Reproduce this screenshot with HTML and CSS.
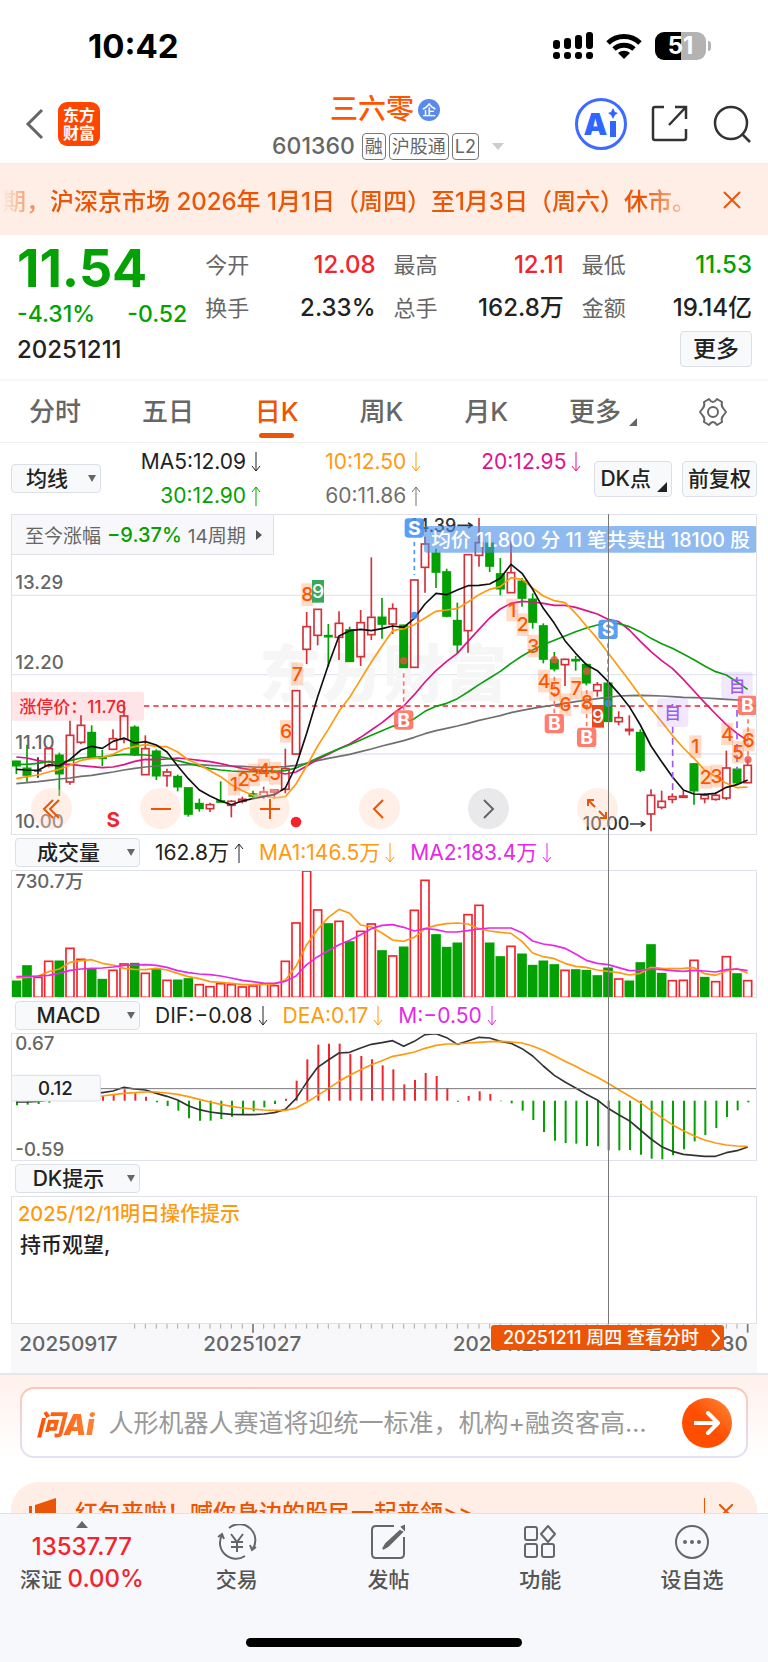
FILE: index.html
```
<!DOCTYPE html>
<html lang="zh-CN">
<head>
<meta charset="utf-8">
<meta name="viewport" content="width=device-width, initial-scale=1.0">
<title>三六零 601360</title>
<link rel="stylesheet" href="styles.css">
</head>
<body>

<svg class="defs" aria-hidden="true">
    <symbol id="down" viewBox="0 0 10 20"><path d="M5 0v19M1 14l4 5 4-5"/></symbol>
    <symbol id="up" viewBox="0 0 10 20"><path d="M5 20V1M1 6l4-5 4 5"/></symbol>
</svg>

<div class="status-bar">
    <span class="time">10:42</span>
    <div class="status-icons">
        <svg width="40" height="28" viewBox="0 0 40 28">
            <rect x="0" y="8" width="7" height="9" rx="3"/>
            <rect x="11" y="6" width="7" height="11" rx="3"/>
            <rect x="22" y="3" width="7" height="14" rx="3"/>
            <rect x="33" y="0" width="7" height="17" rx="3"/>
            <rect x="0" y="20" width="7" height="7" rx="3"/>
            <rect x="11" y="20" width="7" height="7" rx="3"/>
            <rect x="22" y="20" width="7" height="7" rx="3"/>
            <rect x="33" y="20" width="7" height="7" rx="3"/>
        </svg>
        <svg width="36" height="26" viewBox="0 0 36 26">
            <path d="M2 10a23 23 0 0 1 32 0" fill="none" stroke="#000" stroke-width="5"/>
            <path d="M8 16a15 15 0 0 1 20 0" fill="none" stroke="#000" stroke-width="5"/>
            <path d="M12 20a9 9 0 0 1 12 0l-6 6z"/>
        </svg>
        <div class="battery"><span>51</span></div>
    </div>
</div>

<header class="header">
    <div class="header-left">
        <button class="icon-btn" aria-label="返回">
            <svg width="20" height="32" viewBox="0 0 20 32"><path d="M17 2L3 16l14 14" fill="none" stroke="#666" stroke-width="3"/></svg>
        </button>
        <a class="logo" href="#">东方<br>财富</a>
    </div>
    <div class="header-title">
        <h1>三六零<span class="corp">企</span></h1>
        <div class="code">
            <span>601360</span>
            <span class="tag">融</span><span class="tag">沪股通</span><span class="tag">L2</span>
            <i class="caret"></i>
        </div>
    </div>
    <div class="header-right">
        <button class="ai-btn" aria-label="Ai">A<svg width="11" height="32" viewBox="0 0 11 32"><path d="M6 0l2 4 3 1-3 2-2 4-2-4-3-2 3-1zM3 13h6v16H3z" fill="#2f66ff"/></svg></button>
        <button class="icon-btn" aria-label="分享">
            <svg width="38" height="38" viewBox="0 0 38 38" fill="none" stroke="#333" stroke-width="2.5"><path d="M13 2H4q-2 0-2 2v29q0 2 2 2h29q2 0 2-2v-9M35 14V2H24M35 2L18 20"/></svg>
        </button>
        <button class="icon-btn" aria-label="搜索">
            <svg width="38" height="38" viewBox="0 0 38 38" fill="none" stroke="#333" stroke-width="2.5"><circle cx="18" cy="18" r="16"/><path d="M29 29l8 8"/></svg>
        </button>
    </div>
</header>

<div class="notice">
    <p>期，沪深京市场 2026年 1月1日（周四）至1月3日（周六）休市。</p>
    <button class="icon-btn" aria-label="关闭">
        <svg width="18" height="18" viewBox="0 0 18 18"><path d="M1 1l16 16M17 1L1 17" stroke="#ec5505" stroke-width="2"/></svg>
    </button>
</div>

<section class="quote">
    <div class="price">
        <strong class="green">11.54</strong>
        <p class="green"><span>-4.31%</span><span>-0.52</span></p>
    </div>
    <dl>
        <div><dt>今开</dt><dd class="red">12.08</dd></div>
        <div><dt>换手</dt><dd>2.33%</dd></div>
    </dl>
    <dl>
        <div><dt>最高</dt><dd class="red">12.11</dd></div>
        <div><dt>总手</dt><dd>162.8万</dd></div>
    </dl>
    <dl>
        <div><dt>最低</dt><dd class="green">11.53</dd></div>
        <div><dt>金额</dt><dd>19.14亿</dd></div>
    </dl>
    <div class="quote-date">
        <span>20251211</span>
        <button class="btn">更多</button>
    </div>
</section>

<nav class="tabs">
    <a href="#">分时</a>
    <a href="#">五日</a>
    <a href="#" class="active">日K</a>
    <a href="#">周K</a>
    <a href="#">月K</a>
    <a href="#" class="more">更多</a>
    <button class="icon-btn" aria-label="设置">
        <svg width="30" height="30" viewBox="0 0 30 30" fill="none" stroke="#666" stroke-width="2"><path d="M11 2q2 3 4 3t4-3l5 3q-1 4 1 6l3 4-3 4q-2 2-1 6l-5 3q-2-3-4-3t-4 3l-5-3q1-4-1-6l-3-4 3-4q2-2 1-6z" stroke-linejoin="round"/><circle cx="15" cy="15" r="5"/></svg>
    </button>
</nav>

<section class="chart">
    <div class="ma-row">
        <span class="dropdown small"><select aria-label="均线"><option>均线</option></select></span>
        <div class="ma-values">
            <span>MA5:12.09<svg><use href="#down"/></svg></span>
            <span class="orange">10:12.50<svg><use href="#down"/></svg></span>
            <span class="pink">20:12.95<svg><use href="#down"/></svg></span>
            <span class="green">30:12.90<svg><use href="#up"/></svg></span>
            <span class="gray">60:11.86<svg><use href="#up"/></svg></span>
        </div>
        <button class="btn dk">DK点</button>
        <button class="btn">前复权</button>
    </div>

    <div class="panels">
        <div class="panel kline">
            <svg id="kline" viewBox="33 12 2238 963"></svg>
            <button class="range">至今涨幅 <b class="green">−9.37%</b> 14周期<i></i></button>
            <div class="tools">
                <button aria-label="最早"><svg viewBox="0 0 20 20"><path d="M11 1L2 10l9 9M17 1l-9 9 9 9"/></svg></button>
                <button aria-label="缩小"><svg viewBox="0 0 20 20"><path d="M0 10h20"/></svg></button>
                <button aria-label="放大"><svg viewBox="0 0 20 20"><path d="M0 10h20M10 0v20"/></svg></button>
                <button aria-label="左移"><svg viewBox="0 0 20 20"><path d="M14 1l-9 9 9 9"/></svg></button>
                <button aria-label="右移" class="off"><svg viewBox="0 0 20 20"><path d="M6 1l9 9-9 9"/></svg></button>
                <button aria-label="全屏"><svg viewBox="0 0 20 20"><path d="M1 7V1h6M1 1l7 7M19 13v6h-6M19 19l-7-7"/></svg></button>
            </div>
        </div>

        <div class="panel-head">
            <span class="dropdown"><select aria-label="成交量"><option>成交量</option></select></span>
            <span>162.8万<svg><use href="#up"/></svg></span>
            <span class="orange">MA1:146.5万<svg><use href="#down"/></svg></span>
            <span class="purple">MA2:183.4万<svg><use href="#down"/></svg></span>
        </div>
        <div class="panel"><svg id="volume" viewBox="33 106 2238 384"></svg></div>

        <div class="panel-head">
            <span class="dropdown"><select aria-label="MACD"><option>MACD</option></select></span>
            <span>DIF:−0.08<svg><use href="#down"/></svg></span>
            <span class="orange">DEA:0.17<svg><use href="#down"/></svg></span>
            <span class="purple">M:−0.50<svg><use href="#down"/></svg></span>
        </div>
        <div class="panel"><svg id="macd" viewBox="33 597 2238 384"></svg></div>

        <div class="panel-head">
            <span class="dropdown"><select aria-label="DK提示"><option>DK提示</option></select></span>
        </div>
        <div class="panel tips">
            <h2>2025/12/11明日操作提示</h2>
            <p>持币观望,</p>
        </div>
        <div class="crosshair"></div>
        <div class="axis">
            <svg id="axis" viewBox="33 0 2238 147"></svg>
            <a class="day-link" href="#">20251211 周四 查看分时<svg width="9" height="18" viewBox="0 0 9 18"><path d="M1 1l7 8-7 8" fill="none" stroke="#fff" stroke-width="2"/></svg></a>
        </div>
    </div>
</section>

<section class="ask">
    <form class="ask-box">
        <label for="ask">问Ai</label>
        <input type="text" id="ask" placeholder="人形机器人赛道将迎统一标准，机构+融资客高…">
        <button type="button" aria-label="提问">
            <svg width="26" height="24" viewBox="0 0 26 24"><path d="M1 12h23M14 2l10 10-10 10" fill="none" stroke="#fff" stroke-width="4" stroke-linecap="round" stroke-linejoin="round"/></svg>
        </button>
    </form>
    <div class="promo">
        <svg width="28" height="26" viewBox="0 0 28 26" fill="#ec5505"><path d="M0 8h3v14H0zM6 7l21-7v26L6 20z"/></svg>
        <a href="#">红包来啦！喊你身边的股民一起来领&gt;&gt;</a>
        <button class="icon-btn" aria-label="关闭">
            <svg width="14" height="14" viewBox="0 0 14 14"><path d="M0 0l14 14M14 0L0 14" stroke="#ec5505" stroke-width="2"/></svg>
        </button>
    </div>
</section>

<nav class="tabbar">
    <div class="tab-items">
        <a href="#" class="index">
            <i></i>
            <b class="red">13537.77</b>
            <span>深证 <b class="red">0.00%</b></span>
        </a>
        <a href="#">
            <svg width="40" height="36" viewBox="0 0 40 36"><path d="M12 4a16 16 0 0 1 23 22M28 32A16 16 0 0 1 5 11M1 13l4-3 2 5M39 23l-4 3-2-5M14 10l6 8 6-8M20 18v10M14 18h12M14 23h12"/></svg>
            <span>交易</span>
        </a>
        <a href="#">
            <svg width="36" height="36" viewBox="0 0 36 36"><path d="M24 2H6q-4 0-4 4v24q0 4 4 4h24q4 0 4-4V13"/><path d="M30 7L16 20l-3 5 5-3L32 8zM32 3l2-1v3z" fill="#666"/></svg>
            <span>发帖</span>
        </a>
        <a href="#">
            <svg width="36" height="36" viewBox="0 0 36 36"><rect x="3" y="3" width="12" height="13" rx="2"/><rect x="3" y="20" width="12" height="13" rx="2"/><rect x="20" y="20" width="12" height="13" rx="2"/><path d="M26 2l7 8-7 8-7-8z" stroke-linejoin="round"/></svg>
            <span>功能</span>
        </a>
        <a href="#">
            <svg width="36" height="36" viewBox="0 0 36 36"><circle cx="18" cy="18" r="16"/><g fill="#666"><circle cx="11" cy="18" r="1"/><circle cx="18" cy="18" r="1"/><circle cx="25" cy="18" r="1"/></g></svg>
            <span>设自选</span>
        </a>
    </div>
    <div class="home"></div>
</nav>

<script>
    // high, open/close top, open/close bottom, low (chart units, y goes down)
    var candles = [
        ['g',752,754,767,792],['g',704,775,795,815],['k',742,781,784,803],['r',714,716,767,772],['g',728,736,791,858],
        ['r',632,676,816,824],['r',616,646,697,703],['g',646,668,741,741],['g',720,742,745,768],['r',658,686,718,720],
        ['r',576,618,688,700],['g',646,652,734,738],['r',676,716,794,794],['g',718,724,797,810],['r',776,786,797,830],
        ['g',794,800,830,844],['g',832,834,912,920],['g',866,881,895,905],['r',878,884,896,906],['g',814,873,876,876],
        ['r',870,874,886,922],['r',860,868,874,880],['g',842,852,858,864],['r',830,846,858,866],['r',838,840,846,866],
        ['r',716,776,838,850],['r',542,542,732,732],['r',306,350,418,462],['r',298,298,376,406],['g',342,377,380,470],
        ['r',304,340,382,450],['g',350,360,454,454],['r',300,338,440,468],['r',142,322,374,390],['g',264,322,342,386],
        ['r',280,296,342,372],['g',344,346,472,472],['r',210,210,472,472],['r',80,102,172,248],['g',116,130,186,234],
        ['g',176,186,318,322],['g',278,332,404,430],['r',134,134,362,428],['r',24,98,136,170],['g',90,100,168,186],
        ['g',144,192,236,256],['r',92,188,248,248],['g',204,214,264,290],['g',250,268,336,356],['g',340,348,447,460],
        ['g',426,450,476,484],['r',446,448,464,528],['g',438,449,452,482],['g',460,464,518,526],['r',516,524,542,560],
        ['g',516,520,634,636],['r',604,623,635,646],['r',616,658,662,676],['g',658,668,780,786],['r',838,856,912,964],
        ['r',842,874,892,898],['r',850,860,868,880],['r',842,858,862,864],['g',760,762,842,884],['r',850,856,866,880],
        ['r',846,856,868,872],['r',722,774,864,870],['g',772,778,818,824],['r',748,766,818,820]
    ];
    var ma5 = [778,780,781,764,768,748,720,709,715,694,684,699,695,705,726,768,806,840,858,873,884,873,866,860,854,834,768,670,560,465,378,362,358,362,356,348,352,325,282,250,254,240,227,226,222,205,163,190,238,295,340,392,430,464,482,514,550,590,645,708,755,800,840,852,853,850,832,824,810];
    var ma10 = [806,800,795,786,778,766,751,745,742,733,717,710,704,709,710,726,750,764,782,800,824,842,856,858,864,860,822,768,708,658,604,562,508,456,408,362,356,344,324,304,300,296,276,254,238,230,203,208,234,258,272,278,310,348,386,428,470,512,558,596,635,676,714,745,780,800,820,833,831];
    var ma20 = [741,744,752,756,762,763,767,770,773,771,764,754,748,749,747,744,747,751,755,761,768,775,780,782,784,792,786,768,748,733,716,702,682,660,638,612,588,554,516,482,454,430,394,358,324,297,280,274,276,280,286,286,292,302,312,328,335,360,394,425,452,475,508,543,578,612,644,670,692];
    var ma30 = [763,763,760,754,757,752,744,741,741,736,733,734,735,738,744,752,760,768,776,780,783,785,785,784,784,782,774,760,744,730,716,704,690,676,662,649,640,626,604,589,580,566,546,524,504,484,460,438,420,404,391,378,365,354,345,340,341,350,365,385,401,415,432,449,468,485,495,516,538];
    var ma60 = [821,818,815,811,807,804,799,796,791,786,780,775,771,768,766,765,764,764,766,768,768,769,771,772,771,770,766,760,752,745,739,733,725,717,708,700,692,682,671,662,655,648,640,631,624,617,608,601,595,590,585,580,575,570,566,562,558,557,556,557,558,560,562,563,564,566,568,570,572];

    var volumes = 'g440 g394 r428 r380 g380 r341 r374 g405 g435 r407 r388 g387 r416 g404 r437 g437 g433 r450 r456 r447 r450 r457 r454 r448 r453 r380 r265 r109 r226 g268 r260 g322 r290 r268 g349 r364 g338 r227 r137 g301 g339 g326 r240 r212 g326 g367 r335 g359 g393 g380 g391 r407 g406 g408 g424 g401 r433 g440 g385 g331 g417 r438 r437 r377 g429 r441 r366 g418 r438'.split(' ');
    var vol1 = [430,428,424,411,403,383,378,375,386,391,401,404,405,401,406,416,426,432,441,443,446,450,450,449,449,436,395,330,284,248,224,236,271,277,295,316,320,308,282,272,267,265,268,282,289,293,296,320,355,366,372,386,395,398,406,410,414,421,416,398,401,402,401,399,417,422,409,402,416];
    var vol2 = [426,425,424,422,416,407,403,401,400,397,392,391,390,392,398,408,414,418,420,424,430,437,441,445,446,440,424,390,366,348,330,317,300,282,272,270,278,289,282,285,292,292,288,283,280,280,280,294,319,328,333,341,358,377,386,390,399,408,407,403,405,408,410,407,409,412,405,403,408];

    var bars = [814,812,810,806,798,792,790,788,786,780,766,778,788,805,816,830,853,860,860,855,848,840,832,820,810,794,740,676,632,629,629,660,666,676,694,706,751,738,717,726,762,803,786,772,780,802,808,830,858,894,920,927,929,936,937,949,949,948,962,974,976,964,946,922,903,882,849,829,805];
    var dif = [804,804,802,798,792,786,780,776,776,771,760,765,768,778,787,798,815,827,834,838,841,842,842,840,836,826,794,745,700,678,657,655,642,631,626,620,637,622,602,599,611,631,621,610,612,622,628,644,666,696,724,744,762,781,798,823,842,860,888,915,938,952,961,964,967,967,956,950,939];
    var dea = [798,797,796,794,792,790,788,787,786,782,778,776,774,774,777,781,788,796,804,811,817,822,825,828,829,829,822,805,784,764,742,724,707,692,680,667,661,654,643,634,630,630,627,625,623,622,624,627,636,649,665,682,697,714,730,748,767,786,806,829,851,872,890,905,918,927,933,936,937];

    function x(i) { return Math.round(49 + i * 32.27); }

    function line(data, color) {
        var pts = data.map(function (v, i) { return x(i) + ',' + v; }).join(' ');
        return '<polyline class="line" points="' + pts + '" stroke="' + color + '"/>';
    }
    function rule(x1, y1, x2, y2, cls) {
        return '<line class="' + cls + '" x1="' + x1 + '" y1="' + y1 + '" x2="' + x2 + '" y2="' + y2 + '"/>';
    }
    function text(px, py, str, cls) {
        return '<text class="' + cls + '" x="' + px + '" y="' + py + '">' + str + '</text>';
    }
    function badge(px, py, w, h, str, cls) {
        return '<rect class="' + cls + '" x="' + (px - w / 2) + '" y="' + (py - h / 2) + '" width="' + w + '" height="' + h + '" rx="' + (cls.indexOf('num') == 0 ? 0 : 10) + '"/>' +
            text(px, py + 20, str, cls + '-text');
    }
    function dot(px, py, r, cls) {
        return '<circle class="' + cls + '" cx="' + px + '" cy="' + py + '" r="' + r + '"/>';
    }

    function drawKline() {
        var s = '';
        [256, 494, 732].forEach(function (y) { s += rule(33, y, 2271, y, 'grid'); });
        s += text(778, 562, '东方财富', 'watermark');
        s += text(46, 237, '13.29', 'label') + text(46, 477, '12.20', 'label') + text(46, 716, '11.10', 'label') + text(46, 955, '10.00', 'label');
        s += '<rect class="limit" x="33" y="546" width="399" height="86" rx="6"/>' + text(58, 608, '涨停价：11.76', 'limit-text');
        s += rule(432, 588, 2271, 588, 'limit-line');

        candles.forEach(function (c, i) {
            var cx = x(i);
            s += rule(cx, c[1], cx, c[2], 'wick ' + c[0]) + rule(cx, c[3], cx, c[4], 'wick ' + c[0]);
            s += '<rect class="body ' + c[0] + '" x="' + (cx - 11) + '" y="' + c[2] + '" width="22" height="' + (c[3] - c[2]) + '"/>';
        });
        s += line(ma60, '#707070') + line(ma20, '#e0128a') + line(ma30, '#0a9f0a') + line(ma10, '#ff9a0e') + line(ma5, '#111');

        s += rule(1243, 96, 1243, 195, 'dash blue') + rule(1824, 400, 1824, 500, 'dash blue');
        s += rule(1211, 490, 1211, 600, 'dash coral') + rule(1663, 500, 1663, 610, 'dash coral') + rule(1760, 540, 1760, 650, 'dash coral') + rule(2244, 628, 2244, 740, 'dash coral');
        s += rule(2018, 650, 2018, 855, 'dash violet') + rule(2211, 600, 2211, 780, 'dash violet');
        s += dot(1211, 452, 11, 'dot-red') + dot(1663, 449, 11, 'dot-red') + dot(1760, 484, 11, 'dot-red') + dot(2244, 749, 11, 'dot-red');
        s += dot(1243, 316, 11, 'dot-blue') + dot(1824, 580, 11, 'dot-blue');

        [[702,822,1],[731,808,2],[762,795,3],[792,780,4],[825,790,5],[858,664,6],[892,492,7],[922,254,8],
         [1537,300,1],[1568,344,2],[1600,408,3],[1632,513,4],[1665,538,5],[1696,584,6],[1729,535,7],[1761,577,8],
         [2086,710,1],[2117,802,2],[2150,798,3],[2182,672,4],[2214,726,5],[2246,690,6]].forEach(function (n) {
            s += badge(n[0], n[1], 36, 68, n[2], 'num');
        });
        s += badge(954, 244, 36, 68, 9, 'numgreen') + badge(1794, 619, 36, 68, 9, 'numred');

        s += badge(2018, 608, 94, 86, '自', 'self') + badge(2211, 526, 94, 82, '自', 'self');
        s += badge(1211, 630, 58, 58, 'B', 'buy') + badge(1663, 641, 58, 58, 'B', 'buy') + badge(1760, 682, 58, 58, 'B', 'buy') + badge(2242, 586, 58, 58, 'B', 'buy');

        s += text(1230, 66, '14.39', 'mark') + '<path class="arrow" d="M1372 46h44m-12-8l12 8-12 8"/>';
        s += text(1748, 960, '10.00', 'mark') + '<path class="arrow" d="M1890 942h44m-12-8l12 8-12 8"/>';
        s += '<rect class="trade" x="1272" y="48" width="998" height="80" rx="8"/>' + text(1294, 110, '均价 11.800 分 11 笔共卖出 18100 股', 'trade-text');
        s += badge(1243, 54, 58, 58, 'S', 'sell') + badge(1824, 358, 58, 58, 'S', 'sell');
        s += text(340, 952, 'S', 'sign') + dot(888, 936, 16, 'sign-dot');
        document.getElementById('kline').innerHTML = s;
    }

    function drawVolume() {
        var s = '';
        volumes.forEach(function (v, i) {
            var top = +v.slice(1);
            s += '<rect class="vol ' + v[0] + '" x="' + (x(i) - 12) + '" y="' + top + '" width="24" height="' + (488 - top) + '"/>';
        });
        s += line(vol1, '#ff9a0e') + line(vol2, '#e629e6') + text(46, 160, '730.7万', 'label');
        document.getElementById('volume').innerHTML = s;
    }

    function drawMacd() {
        var s = '';
        bars.forEach(function (v, i) {
            s += rule(x(i) + 2, 800, x(i) + 2, v, 'bar ' + (v < 800 ? 'r' : 'g'));
        });
        s += line(dif, '#333') + line(dea, '#ff9a0e') + rule(300, 764, 2271, 764, 'cross');
        s += text(46, 649, '0.67', 'label') + text(46, 966, '-0.59', 'label');
        s += '<rect class="value" x="34" y="724" width="267" height="77" rx="6"/>' + text(166, 784, '0.12', 'value-text');
        document.getElementById('macd').innerHTML = s;
    }

    function drawAxis() {
        var s = '';
        for (var i = 11; i < 69; i++) {
            var major = i == 22 || i == 68;
            s += rule(x(i), 0, x(i), major ? 26 : 14, 'tick' + (major ? ' major' : ''));
        }
        s += text(58, 82, '20250917', 'day') + text(610, 82, '20251027', 'day') + text(1358, 82, '20251127', 'day') + text(1946, 82, '20251230', 'day');
        document.getElementById('axis').innerHTML = s;
    }

    drawKline();
    drawVolume();
    drawMacd();
    drawAxis();
</script>

</body>
</html>
```
FILE: styles.css
```
* {
    box-sizing: border-box;
}
body {
    margin: 0;
    font-family: Inter, "Noto Sans CJK SC", sans-serif;
    font-size: 22px;
    color: #222;
    background: #fff;
}
h1, h2, p, dl, dd {
    margin: 0;
}
a {
    color: inherit;
    text-decoration: none;
}
button, select, input {
    font: inherit;
    color: inherit;
    padding: 0;
    border: 0;
    background: none;
}
svg {
    display: block;
}
.defs {
    position: absolute;
    width: 0;
    height: 0;
}
.red { color: #f4232c; }
.green { color: #03a103; }
.orange { color: #ff9a0e; }
.pink { color: #e0128a; }
.purple { color: #e629e6; }
.gray { color: #707070; }
.icon-btn {
    display: flex;
}

/* status bar */
.status-bar {
    display: flex;
    justify-content: space-between;
    align-items: center;
    height: 92px;
    padding: 0 62px 0 88px;
}
.time {
    font-size: 33px;
    font-weight: 700;
    color: #000;
}
.status-icons {
    display: flex;
    align-items: center;
    gap: 13px;
}
.battery {
    position: relative;
    width: 51px;
    height: 28px;
    border-radius: 9px;
    background: linear-gradient(90deg, #000 51%, #b3b3b3 51%);
    color: #fff;
    font-size: 24px;
    font-weight: 700;
    line-height: 28px;
    text-align: center;
}
.battery::after {
    content: "";
    position: absolute;
    right: -5px;
    top: 9px;
    width: 3px;
    height: 10px;
    border-radius: 0 4px 4px 0;
    background: #b3b3b3;
}

/* header */
.header {
    display: grid;
    grid-template-columns: 1fr auto 1fr;
    height: 72px;
    padding: 0 17px 0 25px;
    border-bottom: 1px solid #eceef3;
}
.header-left, .header-right {
    display: flex;
    align-items: center;
    gap: 13px;
    height: 64px;
}
.header-right {
    justify-content: flex-end;
    gap: 24px;
}
.logo {
    padding: 4px 5px;
    border-radius: 9px;
    background: #ff4600;
    color: #fff;
    font-size: 16px;
    font-weight: 700;
    line-height: 18px;
}
.header-title h1 {
    display: flex;
    justify-content: center;
    align-items: center;
    gap: 4px;
    padding-right: 6px;
    font-size: 28px;
    font-weight: 500;
    line-height: 35px;
    color: #ff5500;
}
.corp {
    width: 22px;
    height: 22px;
    border-radius: 50%;
    background: #5b8bea;
    color: #fff;
    font-size: 14px;
    line-height: 22px;
    text-align: center;
}
.code {
    display: flex;
    align-items: center;
    gap: 3px;
    height: 38px;
    font-size: 23px;
    font-weight: 500;
    color: #666;
}
.code span:first-child {
    margin-right: 4px;
}
.tag {
    padding: 0 2px;
    border: 1px solid #777;
    border-radius: 4px;
    font-size: 18px;
    font-weight: 400;
    line-height: 25px;
}
.caret {
    margin-left: 10px;
    border: 6px solid transparent;
    border-top: 7px solid #ccc;
    border-bottom: 0;
}
.ai-btn {
    display: flex;
    justify-content: center;
    align-items: center;
    width: 52px;
    height: 52px;
    border: 3px solid #3d6bff;
    border-radius: 50%;
    color: #2f66ff;
    font-size: 30px;
    font-weight: 900;
}

/* notice */
.notice {
    display: flex;
    justify-content: space-between;
    align-items: center;
    height: 71px;
    padding: 0 27px 0 2px;
    background: #feeee6;
    color: #ec5505;
}
.notice p {
    flex: 1;
    margin-right: 24px;
    overflow: hidden;
    white-space: nowrap;
    font-size: 24px;
    font-weight: 500;
    -webkit-mask-image: linear-gradient(90deg, transparent, #000 50px, #000 92%, transparent);
    mask-image: linear-gradient(90deg, transparent, #000 50px, #000 92%, transparent);
}

/* quote */
.quote {
    display: grid;
    grid-template-columns: repeat(4, 1fr);
    column-gap: 18px;
    padding: 8px 16px 12px 17px;
    border-bottom: 2px solid #f5f6f9;
    font-size: 24px;
    font-weight: 500;
}
.price strong {
    display: block;
    font-size: 52px;
    font-weight: 700;
    line-height: 52px;
}
.price p {
    display: flex;
    justify-content: space-between;
    font-size: 23px;
    line-height: 38px;
}
.quote dl div {
    display: flex;
    justify-content: space-between;
    align-items: baseline;
    height: 43px;
    line-height: 43px;
}
.quote dt {
    color: #666;
    font-size: 22px;
    font-weight: 400;
}
.quote-date {
    grid-column: 1 / 5;
    display: flex;
    justify-content: space-between;
    align-items: center;
    margin-top: -2px;
}
.btn {
    height: 36px;
    padding: 0 12px;
    border: 1px solid #dcdfe6;
    border-radius: 4px;
    background: #f8f9fb;
    font-size: 23px;
    font-weight: 500;
    line-height: 32px;
    white-space: nowrap;
}

/* period tabs */
.tabs {
    display: flex;
    justify-content: space-between;
    align-items: center;
    height: 62px;
    padding: 0 40px 0 29px;
    border-bottom: 1px solid #f2f2f5;
    font-size: 26px;
    font-weight: 500;
    line-height: 36px;
    color: #666;
}
.tabs a {
    position: relative;
}
.tabs .active {
    color: #ec5505;
}
.tabs .active::after {
    content: "";
    position: absolute;
    left: 50%;
    bottom: -8px;
    width: 35px;
    height: 5px;
    margin-left: -18px;
    border-radius: 3px;
    background: #ec5505;
}
.tabs .more {
    padding-right: 16px;
}
.more::after, .dk::after {
    content: "";
    position: absolute;
    right: 0;
    bottom: 4px;
    border: 4px solid #666;
    border-top-color: transparent;
    border-left-color: transparent;
}

/* indicator rows */
.chart {
    padding: 0 11px;
}
.ma-row {
    display: flex;
    align-items: center;
    height: 71px;
}
.ma-row .btn {
    position: relative;
    margin-left: 10px;
    padding: 0 5px;
    font-size: 21px;
}
.ma-row .dk {
    margin-left: 13px;
    padding-right: 20px;
}
.dk::after {
    right: 4px;
    bottom: 4px;
    border-width: 5px;
    border-right-color: #222;
    border-bottom-color: #222;
}
.dropdown {
    position: relative;
    width: 125px;
}
.dropdown select {
    display: block;
    width: 100%;
    height: 29px;
    padding-right: 18px;
    border: 1px solid #dcdfe6;
    border-radius: 4px;
    background: #f8f9fb;
    appearance: none;
    font-size: 21px;
    font-weight: 500;
    line-height: 27px;
    text-align: center;
    text-align-last: center;
}
.dropdown::after {
    content: "";
    position: absolute;
    right: 5px;
    top: 11px;
    border: 4px solid transparent;
    border-top: 7px solid #666;
    border-bottom: 0;
}
.dropdown.small {
    width: 90px;
}
.ma-values {
    flex: 1;
    display: grid;
    grid-template-columns: repeat(3, 1fr);
}
.ma-values span, .panel-head > span {
    display: flex;
    justify-content: flex-end;
    align-items: center;
    gap: 5px;
    font-size: 21px;
    line-height: 34px;
}
.ma-values svg, .panel-head svg {
    width: 10px;
    height: 20px;
    fill: none;
    stroke: currentColor;
    stroke-width: 1;
}
.panel-head {
    display: flex;
    align-items: center;
    gap: 15px;
    height: 35px;
    padding-left: 4px;
}
.panel-head .dropdown {
    display: block;
}

/* chart panels */
.panels {
    position: relative;
}
.panel {
    position: relative;
    outline: 1px solid #dfe2ea;
    outline-offset: -1px;
}
.panel > svg, .axis > svg {
    width: 100%;
    height: auto;
}
.range {
    position: absolute;
    left: 0;
    top: 0;
    display: flex;
    align-items: center;
    gap: 6px;
    height: 41px;
    padding: 0 11px 0 13px;
    border: 1px solid #dfe2ea;
    background: #f8f8fbee;
    color: #666;
    font-size: 19px;
}
.range b {
    font-size: 20px;
    font-weight: 500;
}
.range i {
    margin-left: 4px;
    border: 5px solid transparent;
    border-left: 6px solid #555;
    border-right: 0;
}
.tools {
    position: absolute;
    left: 20px;
    right: 139px;
    bottom: 6px;
    display: flex;
    justify-content: space-between;
}
.tools button {
    display: flex;
    justify-content: center;
    align-items: center;
    width: 41px;
    height: 41px;
    border-radius: 50%;
    background: #ffd8c466;
}
.tools .off {
    background: #c8c8cc66;
}
.tools svg {
    width: 20px;
    height: 20px;
    fill: none;
    stroke: #ec5505;
    stroke-width: 2;
}
.tools .off svg {
    stroke: #666;
}
.crosshair {
    position: absolute;
    left: 80%;
    top: 0;
    bottom: 49px;
    width: 1px;
    background: #777;
}
.tips {
    height: 128px;
    padding: 5px 7px;
}
.tips h2 {
    font-size: 20px;
    font-weight: 500;
    line-height: 26px;
    color: #ff9a0e;
}
.tips p {
    padding-left: 2px;
    font-size: 21px;
    font-weight: 500;
    line-height: 36px;
}
.axis {
    position: relative;
    background: #f8f8fb;
}
.day-link {
    position: absolute;
    left: 480px;
    top: 1px;
    display: flex;
    align-items: center;
    gap: 12px;
    padding: 0 4px 0 12px;
    border-radius: 3px;
    background: #ec5505;
    color: #fff;
    font-size: 18px;
    font-weight: 500;
    line-height: 25px;
    white-space: nowrap;
}

/* chart drawing, 3 units to a pixel */
.grid { stroke: #e3e7f0; stroke-width: 4; }
.watermark { fill: #f6f6f7; font-size: 186px; font-weight: 900; }
.label { fill: #666; font-size: 56px; font-weight: 500; }
.limit { fill: #ffe5e7; }
.limit-text { fill: #f4232c; font-size: 51px; font-weight: 500; }
.limit-line { stroke: #f4232c; stroke-width: 5; stroke-dasharray: 16 12; }
.line { fill: none; stroke-width: 5; stroke-linejoin: round; }
.wick { stroke-width: 5; }
.wick.r { stroke: #d2333b; }
.wick.g { stroke: #03a103; }
.wick.k { stroke: #222; }
.body { stroke-width: 5; }
.body.r { fill: none; stroke: #d2333b; }
.body.g { fill: #03a103; stroke: #03a103; }
.body.k { fill: #222; stroke: #222; stroke-width: 1; }
.dash { stroke-width: 5; stroke-dasharray: 13 11; }
.dash.blue { stroke: #4c97f5; }
.dash.coral { stroke: #fa7868; }
.dash.violet { stroke: #9a5cf5; stroke-dasharray: 20 14; }
.dot-red { fill: #e8503f; opacity: 0.8; }
.dot-blue { fill: #3d8bf5; opacity: 0.9; }
.num { fill: #ff7a33; opacity: 0.27; }
.numgreen { fill: #36a95c; }
.numred { fill: #e8481a; }
.num-text, .numgreen-text, .numred-text { fill: #ff5500; font-size: 58px; font-weight: 500; text-anchor: middle; }
.numgreen-text, .numred-text { fill: #fff; }
.self { fill: #9a5cf5; opacity: 0.14; }
.self-text { fill: #9a5cf5; font-size: 50px; font-weight: 500; text-anchor: middle; }
.buy { fill: #ff6757; opacity: 0.85; }
.sell { fill: #4c97f5; opacity: 0.92; }
.buy-text, .sell-text { fill: #fff; font-size: 58px; font-weight: 700; text-anchor: middle; }
.mark { fill: #333; font-size: 54px; font-weight: 500; }
.arrow { fill: none; stroke: #333; stroke-width: 5; }
.trade { fill: #4a8fe7; opacity: 0.62; }
.trade-text { fill: #fff; font-size: 59px; font-weight: 500; }
.sign { fill: #f4232c; font-size: 62px; font-weight: 700; text-anchor: middle; }
.sign-dot { fill: #f4232c; }
.vol { stroke-width: 5; }
.vol.r { fill: #fff; stroke: #f4232c; }
.vol.g { fill: #03a103; stroke: #03a103; }
.bar { stroke-width: 6; }
.bar.r { stroke: #f4232c; }
.bar.g { stroke: #03a103; }
.cross { stroke: #777; stroke-width: 3; }
.value { fill: #f8f9fb; stroke: #dcdfe6; stroke-width: 3; }
.value-text { fill: #222; font-size: 56px; font-weight: 500; text-anchor: middle; }
.tick { stroke: #aaa; stroke-width: 3; }
.tick.major { stroke: #777; stroke-width: 5; }
.day { fill: #666; font-size: 62px; font-weight: 500; }

/* ask box */
.ask {
    height: 140px;
    padding: 12px 11px 0;
    overflow: hidden;
    border-top: 2px solid #e4e6ec;
    background: linear-gradient(#fff1ec, #fff 60%);
}
.ask-box {
    display: flex;
    align-items: center;
    gap: 14px;
    height: 71px;
    margin: 0 9px 24px;
    padding: 0 14px;
    border: 2px solid transparent;
    border-radius: 14px;
    background: linear-gradient(#fff, #fff) padding-box, linear-gradient(#ffc4b8, #dfe4f7) border-box;
}
.ask-box label {
    background: linear-gradient(90deg, #ff4e00, #ff8336);
    -webkit-background-clip: text;
    background-clip: text;
    color: transparent;
    font-size: 28px;
    font-style: italic;
    font-weight: 900;
}
.ask-box input {
    flex: 1;
    min-width: 0;
    font-size: 25px;
}
.ask-box input::placeholder {
    color: #999;
}
.ask-box button {
    display: flex;
    justify-content: center;
    align-items: center;
    width: 50px;
    height: 50px;
    border-radius: 50%;
    background: linear-gradient(45deg, #ff4e00 50%, #ff8b3d);
}
.promo {
    display: flex;
    align-items: center;
    gap: 18px;
    height: 58px;
    padding: 0 24px 0 18px;
    border-radius: 28px;
    background: #feeee6;
    color: #ec5505;
    font-size: 23px;
    font-weight: 500;
}
.promo .icon-btn {
    margin-left: auto;
    padding: 6px 0 6px 14px;
    border-left: 1px solid #ec5505;
}

/* bottom bar */
.tabbar {
    padding-bottom: 15px;
    border-top: 1px solid #e0e2e8;
    background: #f7f8fb;
    color: #555;
}
.tab-items {
    display: grid;
    grid-template-columns: repeat(5, 1fr);
    padding-left: 9px;
}
.tab-items a {
    display: flex;
    flex-direction: column;
    justify-content: flex-end;
    align-items: center;
    gap: 4px;
    height: 82px;
    font-size: 21px;
    font-weight: 500;
    line-height: 32px;
}
.tab-items b {
    font-size: 24px;
    font-weight: 500;
}
.tab-items svg {
    fill: none;
    stroke: #666;
    stroke-width: 2;
}
.tab-items .index {
    gap: 0;
    padding-right: 6px;
}
.tab-items .index i {
    margin-bottom: 3px;
    border: 6px solid transparent;
    border-top: 0;
    border-bottom: 7px solid #666;
}
.home {
    width: 36%;
    height: 9px;
    margin: 42px auto 0;
    border-radius: 5px;
    background: #000;
}
```
